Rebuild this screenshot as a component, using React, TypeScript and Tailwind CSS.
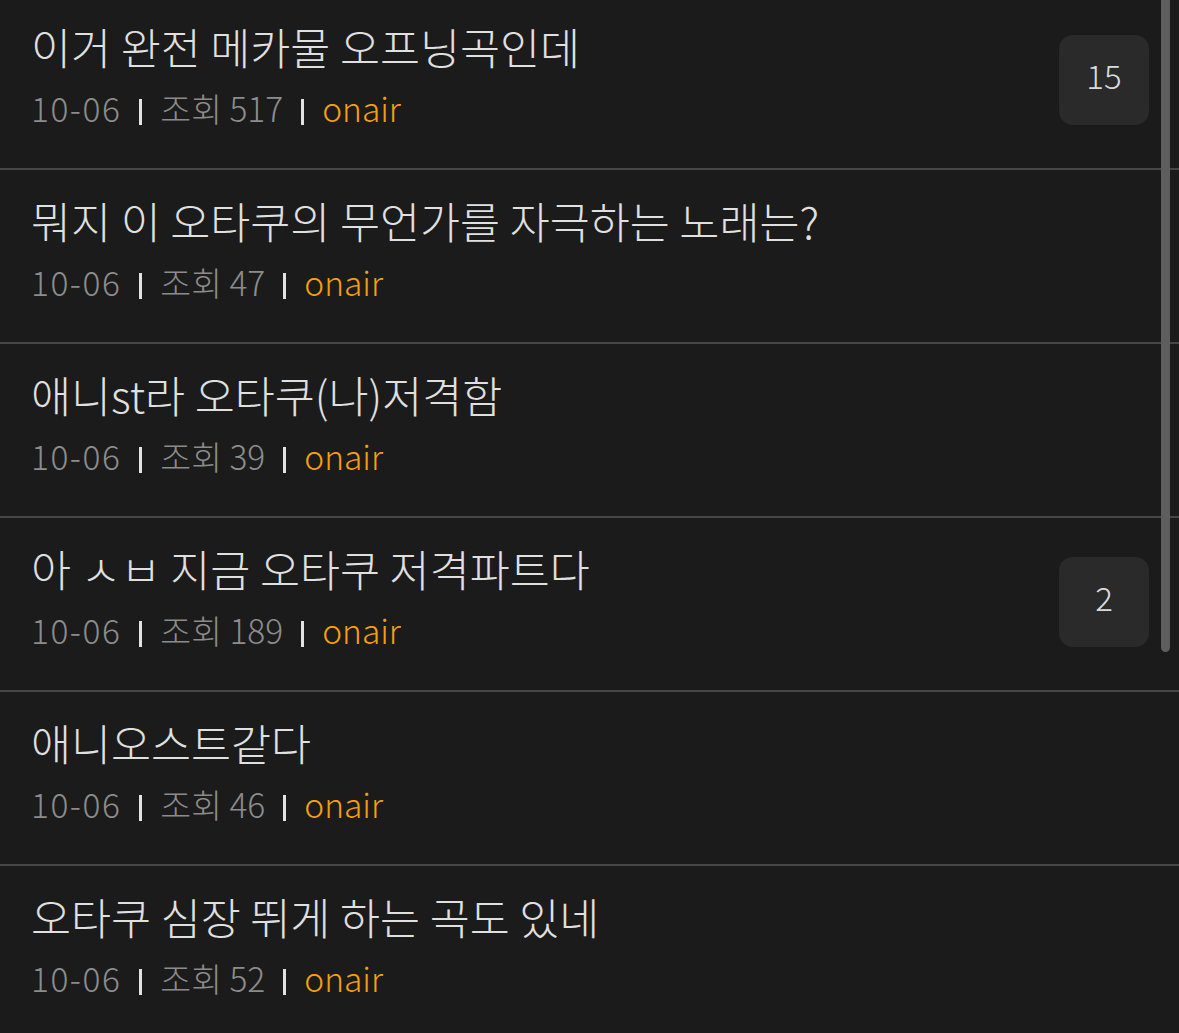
import React from "react";

type Post = {
  title: string;
  date: string;
  views: number;
  tag: string;
  comments?: number;
};

const posts: Post[] = [
  { title: "이거 완전 메카물 오프닝곡인데", date: "10-06", views: 517, tag: "onair", comments: 15 },
  { title: "뭐지 이 오타쿠의 무언가를 자극하는 노래는?", date: "10-06", views: 47, tag: "onair" },
  { title: "애니st라 오타쿠(나)저격함", date: "10-06", views: 39, tag: "onair" },
  { title: "아 ㅅㅂ 지금 오타쿠 저격파트다", date: "10-06", views: 189, tag: "onair", comments: 2 },
  { title: "애니오스트같다", date: "10-06", views: 46, tag: "onair" },
  { title: "오타쿠 심장 뛰게 하는 곡도 있네", date: "10-06", views: 52, tag: "onair" },
];

function Divider() {
  return <span className="mx-[18px] inline-block h-[26px] w-[3px] translate-y-[4px] bg-[#e2e2e2]" />;
}

function PostRow({ post }: { post: Post }) {
  return (
    <div className="flex h-[174px] items-stretch border-b-2 border-[#464646] pl-[31px] pr-[30px]">
      <div className="flex-1 pt-[23px]">
        <div className="text-[43.5px] font-light leading-[56px] text-[#e0e0e0] whitespace-nowrap">{post.title}</div>
        <div className="mt-[11px] flex items-center text-[33.5px] font-light leading-[44px] whitespace-nowrap">
          <span className="tracking-[1.5px] text-[#8c8c8c]">{post.date}</span>
          <Divider />
          <span className="text-[#8c8c8c]">조회 {post.views}</span>
          <Divider />
          <span className="text-[#f5a00c]">{post.tag}</span>
        </div>
      </div>
      {post.comments !== undefined && (
        <div className="-mt-[4px] self-center flex h-[90px] w-[90px] items-center justify-center rounded-[14px] bg-[#2a2a2a] pb-[8px] text-[33px] font-light text-[#dadada]">
          {post.comments}
        </div>
      )}
    </div>
  );
}

export default function App() {
  return (
    <div
      className="relative h-[1033px] w-[1179px] overflow-hidden bg-[#1b1b1b]"
      style={{ fontFamily: '"Noto Sans CJK KR", "Noto Sans", sans-serif' }}
    >
      <div className="-mt-[4px]">
        {posts.map((post, i) => (
          <PostRow key={i} post={post} />
        ))}
      </div>
      <div className="absolute left-[1161px] top-[-10px] h-[662px] w-[9px] rounded-full bg-[#5e5e5e]" />
    </div>
  );
}
